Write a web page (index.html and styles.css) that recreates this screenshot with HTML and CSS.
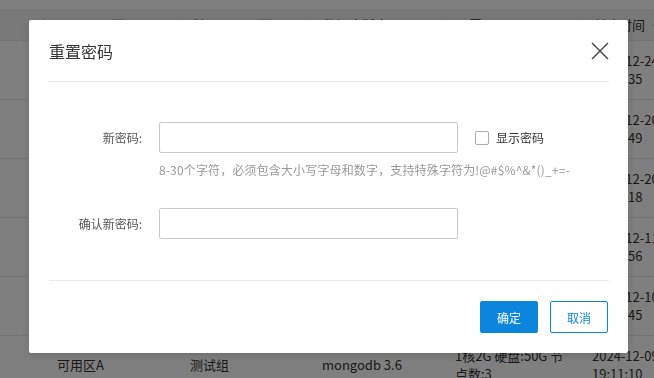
FILE: index.html
```html
<!DOCTYPE html>
<html lang="zh-CN">
<head>
    <meta charset="UTF-8">
    <meta name="viewport" content="width=device-width, initial-scale=1.0">
    <title>重置密码</title>
    <link rel="stylesheet" href="styles.css">
</head>
<body>
    <div class="topbar"></div>
    <div class="table">
        <div class="row head">
            <div class="cell"></div>
            <div class="cell">可用区 <span class="filter"></span></div>
            <div class="cell">所属项目 <span class="filter"></span></div>
            <div class="cell">数据库版本</div>
            <div class="cell">配置</div>
            <div class="cell">创建时间 <span class="sort"></span></div>
        </div>
        <div class="row">
            <div class="cell"></div>
            <div class="cell">可用区A</div>
            <div class="cell">测试组</div>
            <div class="cell">mongodb 3.6</div>
            <div class="cell">1核2G 硬盘:50G 节<br>点数:3</div>
            <div class="cell">2024-12-24<br>10:21:35</div>
        </div>
        <div class="row">
            <div class="cell"></div>
            <div class="cell">可用区A</div>
            <div class="cell">测试组</div>
            <div class="cell">mongodb 3.6</div>
            <div class="cell">1核2G 硬盘:50G 节<br>点数:3</div>
            <div class="cell">2024-12-20<br>16:08:49</div>
        </div>
        <div class="row">
            <div class="cell"></div>
            <div class="cell">可用区A</div>
            <div class="cell">测试组</div>
            <div class="cell">mongodb 3.6</div>
            <div class="cell">1核2G 硬盘:50G 节<br>点数:3</div>
            <div class="cell">2024-12-20<br>11:42:18</div>
        </div>
        <div class="row">
            <div class="cell"></div>
            <div class="cell">可用区A</div>
            <div class="cell">测试组</div>
            <div class="cell">mongodb 3.6</div>
            <div class="cell">1核2G 硬盘:50G 节<br>点数:3</div>
            <div class="cell">2024-12-11<br>09:30:56</div>
        </div>
        <div class="row">
            <div class="cell"></div>
            <div class="cell">可用区A</div>
            <div class="cell">测试组</div>
            <div class="cell">mongodb 3.6</div>
            <div class="cell">1核2G 硬盘:50G 节<br>点数:3</div>
            <div class="cell">2024-12-10<br>15:27:45</div>
        </div>
        <div class="row">
            <div class="cell"></div>
            <div class="cell">可用区A</div>
            <div class="cell">测试组</div>
            <div class="cell">mongodb 3.6</div>
            <div class="cell">1核2G 硬盘:50G 节<br>点数:3</div>
            <div class="cell">2024-12-09<br>19:11:10</div>
        </div>
    </div>

    <div class="mask">
        <div class="modal">
            <div class="modal-header">
                <h2>重置密码</h2>
                <svg class="close" width="18" height="18" viewBox="0 0 18 18">
                    <path d="M1 1 L17 17 M17 1 L1 17" stroke="#444" stroke-width="1.4" fill="none"/>
                </svg>
            </div>
            <div class="modal-body">
                <div class="form-row">
                    <label>新密码:</label>
                    <input type="password">
                    <span class="check"><span class="box"></span>显示密码</span>
                </div>
                <p class="hint">8-30个字符，必须包含大小写字母和数字，支持特殊字符为!@#$%^&amp;*()_+=-</p>
                <div class="form-row second">
                    <label>确认新密码:</label>
                    <input type="password">
                </div>
            </div>
            <div class="modal-footer">
                <button class="btn primary">确定</button>
                <button class="btn">取消</button>
            </div>
        </div>
    </div>
</body>
</html>
```

FILE: styles.css
```css
body {
    font-family: "Noto Sans CJK SC", "Noto Sans", sans-serif;
    margin: 0;
    padding: 0;
    background-color: white;
    color: #333;
    font-size: 13px;
    overflow: hidden;
}
.topbar {
    height: 9px;
    border-bottom: 1px solid #ececec;
}
.row {
    display: grid;
    grid-template-columns: 44px 133px 132px 133px 135px 1fr;
    height: 58px;
    border-bottom: 1px solid #e8e8e8;
    align-items: center;
}
.row.head {
    height: 30px;
    background-color: #f2f2f2;
}
.cell {
    padding-left: 13px;
    line-height: 18px;
    white-space: nowrap;
}
.cell:last-child {
    padding-left: 15px;
}
.head .cell {
    border-left: 1px solid #ddd;
    line-height: 14px;
}
.head .cell:first-child {
    border-left: none;
}
.filter {
    display: inline-block;
    width: 11px;
    height: 11px;
    border: 1px solid #ccc;
    margin-left: 12px;
    vertical-align: middle;
}
.sort {
    display: inline-block;
    width: 0;
    height: 0;
    border: 4px solid transparent;
    border-bottom-color: #bbb;
    margin-left: 4px;
    vertical-align: 4px;
}
.mask {
    position: fixed;
    top: 0;
    left: 0;
    right: 0;
    bottom: 0;
    background-color: rgba(0,0,0,0.5);
}
.modal {
    width: 599px;
    margin: 20px 0 0 29px;
    background-color: white;
    border-radius: 2px;
    box-shadow: 0 2px 8px rgba(0,0,0,0.15);
}
.modal-header {
    display: flex;
    justify-content: space-between;
    align-items: center;
    height: 61px;
    margin: 0 19px 0 20px;
    border-bottom: 1px solid #e8e8e8;
}
.modal-header h2 {
    margin: 0;
    font-size: 16px;
    font-weight: normal;
    color: #333;
}
.modal-body {
    margin: 0 19px 0 20px;
    padding: 40px 0 41px;
    border-bottom: 1px solid #e8e8e8;
}
.form-row {
    display: flex;
    align-items: center;
}
.form-row label {
    width: 93px;
    margin-right: 17px;
    text-align: right;
    font-size: 12px;
    color: #555;
}
.form-row input {
    width: 299px;
    height: 31px;
    box-sizing: border-box;
    border: 1px solid #c9c9c9;
    border-radius: 2px;
    margin: 0;
}
.check {
    display: flex;
    align-items: center;
    margin-left: 17px;
    font-size: 12px;
    color: #333;
}
.check .box {
    width: 12px;
    height: 12px;
    border: 1px solid #aaa;
    border-radius: 2px;
    margin-right: 7px;
}
.hint {
    margin: 8px 0 0 110px;
    font-size: 12px;
    line-height: 18px;
    letter-spacing: 0.15px;
    color: #999;
}
.form-row.second {
    margin-top: 29px;
}
.modal-footer {
    display: flex;
    justify-content: flex-end;
    gap: 12px;
    padding: 20px 20px 20px;
}
.btn {
    width: 58px;
    height: 32px;
    font-family: inherit;
    font-size: 12px;
    border: 1px solid #0c86dc;
    border-radius: 2px;
    background-color: white;
    color: #0c86dc;
    padding: 0;
}
.btn.primary {
    background-color: #0c86dc;
    color: white;
}
```
